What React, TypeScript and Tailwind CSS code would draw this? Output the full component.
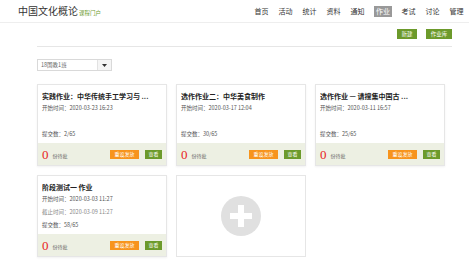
import React from 'react';

const font = { fontFamily: '"Noto Sans CJK SC", "Noto Sans", sans-serif' };

const navItems = ['首页', '活动', '统计', '资料', '通知', '作业', '考试', '讨论', '管理'];

const tasks = [
  { title: '实践作业：中华传统手工学习与 ...', start: '2020-03-23 16:23', submit: '2/65' },
  { title: '选作作业二：中华美食制作', start: '2020-03-17 12:04', submit: '30/65' },
  { title: '选作作业 — 请搜集中国古 ...', start: '2020-03-11 16:57', submit: '25/65' },
  { title: '阶段测试一 作业', start: '2020-03-03 11:27', end: '2020-03-09 11:27', submit: '58/65' },
];

function TaskCard({ t }: { t: any }) {
  return (
    <div className="h-[82px] border border-[#e6e6e6] bg-white flex flex-col shadow-[0_1px_2px_rgba(0,0,0,0.06)]">
      <div className="flex-1 px-[4px] pt-[5px]">
        <div className="text-[7px] leading-[12px] font-bold text-[#222] whitespace-nowrap overflow-hidden">{t.title}</div>
        <div className="text-[5.5px] leading-[8px] text-[#555] mt-[2px]">开始时间：{t.start}</div>
        {t.end ? (
          <>
            <div className="text-[5.5px] leading-[8px] text-[#888] mt-[5px]">截止时间：{t.end}</div>
            <div className="text-[5.5px] leading-[8px] text-[#555] mt-[5px]">提交数：{t.submit}</div>
          </>
        ) : (
          <div className="text-[5.5px] leading-[8px] text-[#555] mt-[18px]">提交数：{t.submit}</div>
        )}
      </div>
      <div className="h-[22px] bg-[#edf0e3] flex items-center px-[4px]">
        <span className="text-[13px] leading-none text-[#e8231c]" style={{ fontFamily: '"Liberation Serif", serif' }}>0</span>
        <span className="text-[5px] text-[#666] ml-[4px] mt-[3px]">份待批</span>
        <div className="ml-auto flex gap-[6px]">
          <div className="w-[29px] h-[9px] bg-[#f7941d] text-white text-[5px] flex items-center justify-center">重设发放</div>
          <div className="w-[17px] h-[9px] bg-[#6c9a2b] text-white text-[5px] flex items-center justify-center">查看</div>
        </div>
      </div>
    </div>
  );
}

export default function App() {
  return (
    <div className="w-[469px] h-[264px] bg-white overflow-hidden" style={font}>
      {/* Header */}
      <div className="h-[23px] border-b border-[#eeeeee] flex items-center pl-[18px] pr-[5px]">
        <div className="flex items-end">
          <span className="text-[10px] leading-none text-[#333]">中国文化概论</span>
          <span className="text-[5.5px] leading-none text-[#6c9a2b] ml-[1px]">课程门户</span>
        </div>
        <div className="ml-auto flex items-center gap-[9px] text-[7px] text-[#333]">
          {navItems.map((n) => (
            <span
              key={n}
              className={n === '作业' ? 'bg-[#999999] text-white px-[2px] leading-[11px]' : 'leading-[11px] px-[0.5px]'}
            >
              {n}
            </span>
          ))}
        </div>
      </div>

      <div className="mx-[37px] w-[415px]">
        {/* action buttons */}
        <div className="flex justify-end gap-[9px] pt-[6px] pb-[7px] border-b border-[#e6e6e6]">
          <div className="w-[20px] h-[10px] bg-[#6c9a2b] text-white text-[5.5px] flex items-center justify-center">新建</div>
          <div className="w-[26px] h-[10px] bg-[#6c9a2b] text-white text-[5.5px] flex items-center justify-center">作业库</div>
        </div>

        {/* class select */}
        <div className="mt-[12px] w-[75px] h-[12px] border border-[#d9d9d9] flex">
          <div className="flex-1 text-[5.5px] text-[#666] flex items-center pl-[3px]">18国教1班</div>
          <div className="w-[14px] border-l border-[#e2e2e2] bg-[#f5f5f5] flex items-center justify-center">
            <svg width="5" height="3" viewBox="0 0 5 3"><path d="M0 0h5L2.5 3z" fill="#333" /></svg>
          </div>
        </div>

        {/* cards */}
        <div className="mt-[13px] grid grid-cols-[130px_130px_130px] gap-x-[9px] gap-y-[9px]">
          {tasks.slice(0, 3).map((t, i) => (
            <TaskCard key={i} t={t} />
          ))}
          <TaskCard t={tasks[3]} />
          <div className="h-[82px] border border-[#e6e6e6] bg-white flex items-center justify-center">
            <div className="w-[40px] h-[40px] rounded-full bg-[#e0e0e0] flex items-center justify-center">
              <svg width="22" height="22" viewBox="0 0 22 22">
                <rect x="8" y="0" width="6" height="22" fill="#fff" />
                <rect x="0" y="8" width="22" height="6" fill="#fff" />
              </svg>
            </div>
          </div>
        </div>
      </div>
    </div>
  );
}
